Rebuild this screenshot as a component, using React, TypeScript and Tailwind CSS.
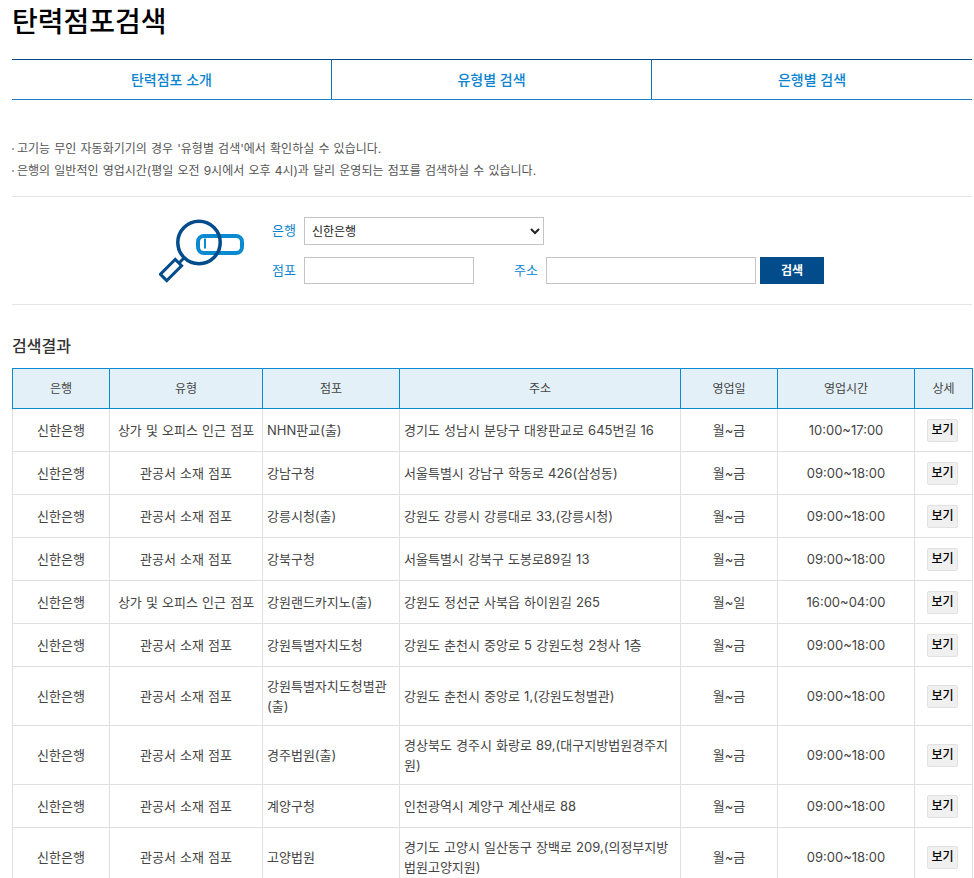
const rows = [
  ["상가 및 오피스 인근 점포", "NHN판교(출)", "경기도 성남시 분당구 대왕판교로 645번길 16", "월~금", "10:00~17:00"],
  ["관공서 소재 점포", "강남구청", "서울특별시 강남구 학동로 426(삼성동)", "월~금", "09:00~18:00"],
  ["관공서 소재 점포", "강릉시청(출)", "강원도 강릉시 강릉대로 33,(강릉시청)", "월~금", "09:00~18:00"],
  ["관공서 소재 점포", "강북구청", "서울특별시 강북구 도봉로89길 13", "월~금", "09:00~18:00"],
  ["상가 및 오피스 인근 점포", "강원랜드카지노(출)", "강원도 정선군 사북읍 하이원길 265", "월~일", "16:00~04:00"],
  ["관공서 소재 점포", "강원특별자치도청", "강원도 춘천시 중앙로 5 강원도청 2청사 1층", "월~금", "09:00~18:00"],
  ["관공서 소재 점포", "강원특별자치도청별관(출)", "강원도 춘천시 중앙로 1,(강원도청별관)", "월~금", "09:00~18:00"],
  ["관공서 소재 점포", "경주법원(출)", "경상북도 경주시 화랑로 89,(대구지방법원경주지원)", "월~금", "09:00~18:00"],
  ["관공서 소재 점포", "계양구청", "인천광역시 계양구 계산새로 88", "월~금", "09:00~18:00"],
  ["관공서 소재 점포", "고양법원", "경기도 고양시 일산동구 장백로 209,(의정부지방법원고양지원)", "월~금", "09:00~18:00"],
];

const headers = ["은행", "유형", "점포", "주소", "영업일", "영업시간", "상세"];

function SearchIcon() {
  return (
    <svg width="90" height="66" viewBox="0 0 90 66" fill="none">
      <rect x="39" y="17" width="44" height="17" rx="6" stroke="#0a8ad0" strokeWidth="4" />
      <path d="M46 19.5v10" stroke="#0a8ad0" strokeWidth="2" />
      <circle cx="40" cy="23.5" r="21.2" fill="none" stroke="#024c8c" strokeWidth="3.5" />
      <path d="M25 39l-5 5" stroke="#024c8c" strokeWidth="3" />
      <rect x="-4.5" y="-10.5" width="9" height="21" transform="translate(12 51) rotate(45)" stroke="#024c8c" strokeWidth="3" />
    </svg>
  );
}

export default function App() {
  return (
    <div className="h-[878px] w-[974px] overflow-hidden bg-white pl-3 pr-[2px] font-['Inter','Noto_Sans_CJK_KR',sans-serif] text-[13px] text-[#444] [word-spacing:0.5px]">
      <h1 className="h-[59px] pt-[2px] text-[28px] leading-[40px] font-medium text-black">탄력점포검색</h1>

      <div className="grid h-[41px] grid-cols-3 border-t border-b border-t-[#024c8c] border-b-[#1b7fc0] [word-spacing:0]">
        {["탄력점포 소개", "유형별 검색", "은행별 검색"].map((tab, i) => (
          <div
            key={tab}
            className={`flex items-center justify-center text-[14px] font-medium text-[#0a84cf] ${i < 2 ? "border-r border-[#1b6fa8]" : ""}`}
          >
            {tab}
          </div>
        ))}
      </div>

      <div className="border-b border-[#e5e5e5] pt-[38px] pb-[14px] text-[12px] leading-[22px] text-[#555] [word-spacing:0.8px]">
        <p className="flex items-center">
          <span className="mr-[3px] h-[2px] w-[2px] bg-[#aaa]" />
          고기능 무인 자동화기기의 경우 '유형별 검색'에서 확인하실 수 있습니다.
        </p>
        <p className="flex items-center">
          <span className="mr-[3px] h-[2px] w-[2px] bg-[#aaa]" />
          은행의 일반적인 영업시간(평일 오전 9시에서 오후 4시)과 달리 운영되는 점포를 검색하실 수 있습니다.
        </p>
      </div>

      <div className="flex h-[108px] border-b border-[#e5e5e5]">
        <div className="ml-[147px] mt-[22px] w-[90px]">
          <SearchIcon />
        </div>
        <div className="ml-[23px] flex flex-col gap-[12px] pt-[20px] text-[13px] text-[#0a84cf]">
          <div className="flex items-center">
            <label className="w-[24px]">은행</label>
            <select className="ml-2 h-[28px] w-[240px] border border-[#c4c4c4] bg-white pl-[3px] text-[12px] text-[#222]">
              <option>신한은행</option>
            </select>
          </div>
          <div className="flex items-center">
            <label className="w-[24px]">점포</label>
            <input className="ml-2 h-[27px] w-[170px] border border-[#c4c4c4]" />
            <label className="ml-[40px] w-[24px]">주소</label>
            <input className="ml-2 h-[27px] w-[210px] border border-[#c4c4c4]" />
            <button className="ml-1 h-[27px] w-[64px] bg-[#024c8c] text-[12px] font-bold text-white">검색</button>
          </div>
        </div>
      </div>

      <h2 className="mt-[30px] h-[33px] text-[16px] leading-[22px] font-medium text-[#333]">검색결과</h2>

      <table className="w-[960px] table-fixed border-collapse">
        <colgroup>
          <col className="w-[97px]" />
          <col className="w-[153px]" />
          <col className="w-[137px]" />
          <col className="w-[281px]" />
          <col className="w-[97px]" />
          <col className="w-[137px]" />
          <col className="w-[58px]" />
        </colgroup>
        <thead>
          <tr className="h-[40px]">
            {headers.map((h) => (
              <th key={h} className="border border-[#0a8ad0] bg-[#e3f0f7] text-[12px] font-normal text-[#444]">
                {h}
              </th>
            ))}
          </tr>
        </thead>
        <tbody>
          {rows.map((row) => (
            <tr key={row[1]} className="h-[43px] leading-[20px]">
              <td className="border border-[#e0e0e0] text-center">신한은행</td>
              <td className="border border-[#e0e0e0] px-1 text-center">{row[0]}</td>
              <td className="border border-[#e0e0e0] px-1 py-[9px]">{row[1]}</td>
              <td className="border border-[#e0e0e0] px-1 py-[9px]">{row[2]}</td>
              <td className="border border-[#e0e0e0] text-center">{row[3]}</td>
              <td className="border border-[#e0e0e0] text-center">{row[4]}</td>
              <td className="border border-[#e0e0e0] text-center">
                <button className="mr-[2px] h-[23px] w-[31px] rounded-[2px] border border-[#e2e2e2] bg-[#f0f0f0] text-[12px] font-medium text-black">
                  보기
                </button>
              </td>
            </tr>
          ))}
        </tbody>
      </table>
    </div>
  );
}
